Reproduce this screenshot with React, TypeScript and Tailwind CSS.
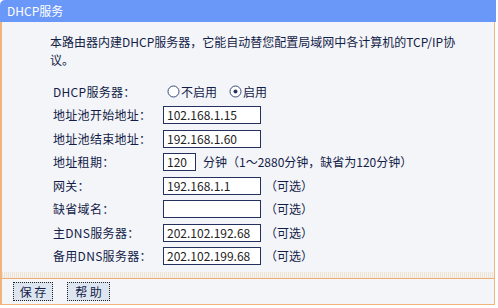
import React from "react";

const font = "font-['Noto_Sans_CJK_SC',sans-serif]";

function Radio({ checked }: { checked?: boolean }) {
  return (
    <svg width="13" height="13" viewBox="0 0 13 13" className="shrink-0">
      <circle cx="6.5" cy="6.5" r="5.5" fill="#fff" stroke="#3b4a7a" strokeWidth="1" />
      {checked && <circle cx="6.5" cy="6.5" r="2" fill="#2a3562" />}
    </svg>
  );
}

function Field({ value, w = "w-[98px]" }: { value: string; w?: string }) {
  return (
    <div
      className={`${w} h-[18px] shrink-0 border border-[#24305e] bg-white px-[3px] text-[12px] leading-[16px] text-[#222]`}
    >
      {value}
    </div>
  );
}

function Row({ label, children }: { label: string; children: React.ReactNode }) {
  return (
    <div className="flex h-[23.5px] items-center">
      <div className="w-[110px] shrink-0 tracking-[0.3px]">{label}</div>
      <div className="flex items-center">{children}</div>
    </div>
  );
}

const optional = <span className="ml-[4px] whitespace-nowrap">（可选）</span>;

export default function App() {
  return (
    <div className={`${font} w-[498px] h-[308px] bg-white text-[12px] text-[#141c48]`}>
      <div className="w-[496px]">
        <div className="flex h-[22px] items-center rounded-tl-[5px] bg-[#6a98f8] pl-[7px] text-white">
          DHCP服务
        </div>
        <div className="w-[495px] border-l-2 border-r border-b border-[#f1b47c] bg-[#f3f5f8]">
          <div className="pl-[48px] pt-[11px] leading-[18px]">
            本路由器内建DHCP服务器，它能自动替您配置局域网中各计算机的TCP/IP协
            <br />
            议。
          </div>
          <div className="mt-[11px] pl-[51px] pb-[4px]">
            <Row label="DHCP服务器：">
              <label className="ml-[4px] flex items-center gap-[1px]">
                <Radio />
                <span>不启用</span>
              </label>
              <label className="ml-[12px] flex items-center gap-[1px]">
                <Radio checked />
                <span>启用</span>
              </label>
            </Row>
            <Row label="地址池开始地址：">
              <Field value="102.168.1.15" />
            </Row>
            <Row label="地址池结束地址：">
              <Field value="192.168.1.60" />
            </Row>
            <Row label="地址租期：">
              <Field value="120" w="w-[33px]" />
              <span className="ml-[7px] whitespace-nowrap">分钟（1～2880分钟，缺省为120分钟）</span>
            </Row>
            <Row label="网关：">
              <Field value="192.168.1.1" />
              {optional}
            </Row>
            <Row label="缺省域名：">
              <Field value="" />
              {optional}
            </Row>
            <Row label="主DNS服务器：">
              <Field value="202.102.192.68" />
              {optional}
            </Row>
            <Row label="备用DNS服务器：">
              <Field value="202.102.199.68" />
              {optional}
            </Row>
          </div>
          <div className="h-[6px] bg-[repeating-linear-gradient(90deg,#ece4d8_0_1px,#f6f3ee_1px_2px)]" />
          <div className="h-[1px] bg-[#eeae72]" />
          <div className="flex h-[25px] items-center gap-[14px] pl-[11px]">
            <button
              type="button"
              className="h-[19px] w-[40px] border border-dotted border-[#222] bg-[#dde6f0] text-[12px] leading-[17px] text-[#141c48]"
            >
              保 存
            </button>
            <button
              type="button"
              className="h-[19px] w-[43px] border border-dotted border-[#222] bg-[#dde6f0] text-[12px] leading-[17px] text-[#141c48]"
            >
              帮 助
            </button>
          </div>
        </div>
      </div>
    </div>
  );
}
